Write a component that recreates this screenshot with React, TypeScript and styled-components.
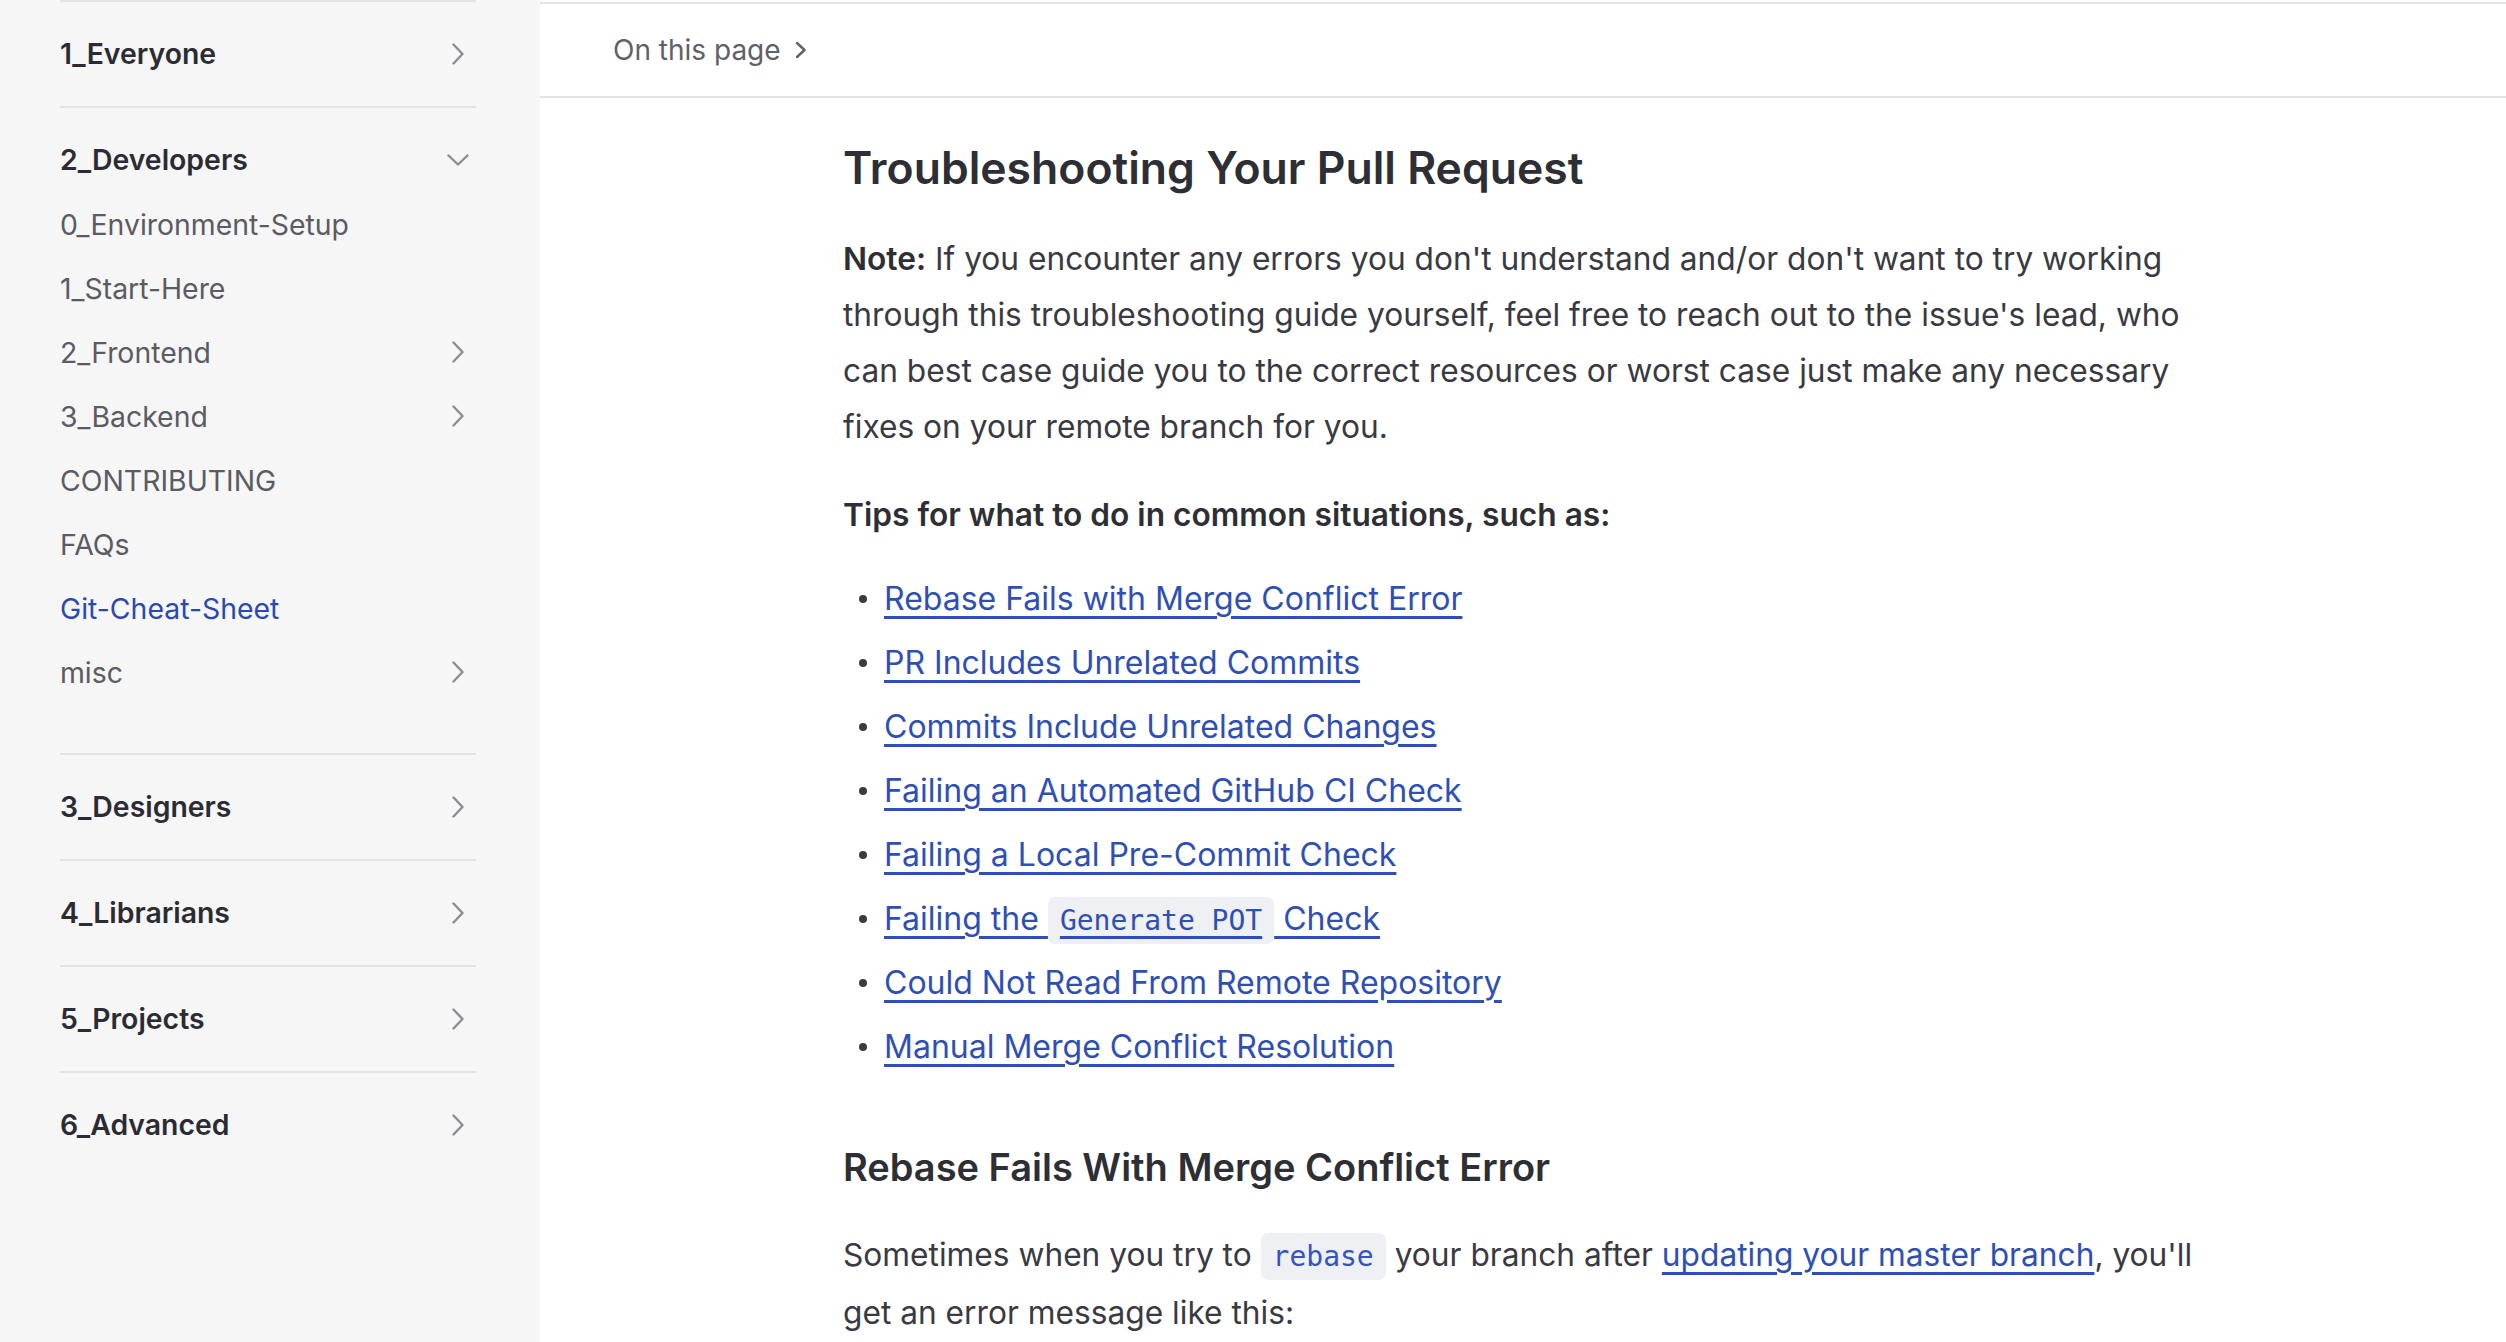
import React from "react";
import styled, { createGlobalStyle } from "styled-components";

const Global = createGlobalStyle`
  html, body { margin: 0; padding: 0; background: #ffffff; }
  body { font-family: Inter, "Noto Sans", sans-serif; -webkit-font-smoothing: antialiased; }
  * { box-sizing: border-box; }
`;

const Layout = styled.div`
  display: grid;
  grid-template-columns: 540px 1fr;
  height: 1342px;
  overflow: hidden;
`;

const Sidebar = styled.nav`
  background: #f6f6f6;
  padding: 0 64px 0 60px;
`;

const Group = styled.section`
  border-top: 2px solid #e3e3e3;
`;

const GroupHeader = styled.div<{ $open?: boolean }>`
  display: flex;
  align-items: center;
  justify-content: space-between;
  padding: ${(p) => (p.$open ? "32px 7px 12px 0" : "32px 7px 32px 0")};
  line-height: 40px;
  font-size: 28.4px;
  font-weight: 600;
  color: #2b2c33;
`;

const SubList = styled.div`
  padding-bottom: 49px;
`;

const SubItem = styled.a<{ $active?: boolean }>`
  display: flex;
  align-items: center;
  justify-content: space-between;
  height: 64px;
  padding-right: 7px;
  font-size: 28.4px;
  color: ${(p) => (p.$active ? "#2a48b0" : "#5a5b63")};
  text-decoration: none;
`;

const IconBox = styled.span`
  width: 22px;
  display: flex;
  justify-content: center;
  align-items: center;
  color: #8c8d94;
`;

const Chevron = ({ down }: { down?: boolean }) =>
  down ? (
    <svg width="22" height="12" viewBox="0 0 22 12" fill="none" stroke="currentColor" strokeWidth="2.4" strokeLinecap="round" strokeLinejoin="round">
      <polyline points="1.5,1.5 11,10.5 20.5,1.5" />
    </svg>
  ) : (
    <svg width="12" height="22" viewBox="0 0 12 22" fill="none" stroke="currentColor" strokeWidth="2.4" strokeLinecap="round" strokeLinejoin="round">
      <polyline points="1.5,1.5 10.5,11 1.5,20.5" />
    </svg>
  );

const Main = styled.main`
  display: flex;
  flex-direction: column;
  min-width: 0;
`;

const TopBar = styled.div`
  margin-top: 2px;
  height: 96px;
  border-top: 2px solid #e4e4e4;
  border-bottom: 2px solid #e4e4e4;
  display: flex;
  align-items: center;
  gap: 14px;
  padding-left: 73px;
  font-size: 28px;
  color: #5f6068;
`;

const TocChevron = styled.span`
  display: flex;
  color: #5f6068;
`;

const Content = styled.article`
  padding-left: 303px;
  width: 1683px;
  color: #393a42;
  font-size: 32px;
  line-height: 56px;
`;

const H1 = styled.h1`
  margin: 35px 0 0;
  font-size: 44.5px;
  font-weight: 600;
  line-height: 70px;
  color: #2e2f35;
`;

const H2 = styled.h2`
  margin: 60px 0 0;
  font-size: 38px;
  font-weight: 600;
  line-height: 56px;
  color: #2e2f35;
`;

const P = styled.p<{ $gap: number; $bold?: boolean; $lh?: number }>`
  margin: ${(p) => p.$gap}px 0 0;
  font-size: 31.7px;
  font-weight: ${(p) => (p.$bold ? 600 : 400)};
  line-height: ${(p) => p.$lh ?? 56}px;
  color: ${(p) => (p.$bold ? "#2e2f35" : "inherit")};
`;

const Strong = styled.strong`
  font-weight: 600;
  color: #2e2f35;
`;

const List = styled.ul`
  margin: 24px 0 0;
  padding: 0 0 0 16px;
  list-style: none;
`;

const Item = styled.li`
  display: flex;
  align-items: center;
  gap: 17px;
  height: 64px;
`;

const Bullet = styled.span`
  width: 8px;
  height: 8px;
  border-radius: 50%;
  background: #393a42;
  flex: none;
`;

const Link = styled.a`
  color: #2f4fb5;
  text-decoration: underline;
  text-decoration-thickness: 3px;
  text-underline-offset: 6px;
`;

const Code = styled.code<{ $accent?: boolean }>`
  font-family: "DejaVu Sans Mono", "Liberation Mono", monospace;
  font-size: 28px;
  line-height: 1;
  background: #eef0f3;
  border-radius: 7px;
  padding: 7px 12px;
  color: ${(p) => (p.$accent ? "#3554c0" : "inherit")};
`;

const developers: { label: string; chevron?: boolean; active?: boolean }[] = [
  { label: "0_Environment-Setup" },
  { label: "1_Start-Here" },
  { label: "2_Frontend", chevron: true },
  { label: "3_Backend", chevron: true },
  { label: "CONTRIBUTING" },
  { label: "FAQs" },
  { label: "Git-Cheat-Sheet", active: true },
  { label: "misc", chevron: true },
];

const collapsed = ["3_Designers", "4_Librarians", "5_Projects", "6_Advanced"];

const tips: React.ReactNode[] = [
  "Rebase Fails with Merge Conflict Error",
  "PR Includes Unrelated Commits",
  "Commits Include Unrelated Changes",
  "Failing an Automated GitHub CI Check",
  "Failing a Local Pre-Commit Check",
  <>
    Failing the <Code>Generate POT</Code> Check
  </>,
  "Could Not Read From Remote Repository",
  "Manual Merge Conflict Resolution",
];

export default function App() {
  return (
    <>
      <Global />
      <Layout>
        <Sidebar>
          <Group>
            <GroupHeader>
              1_Everyone
              <IconBox>
                <Chevron />
              </IconBox>
            </GroupHeader>
          </Group>
          <Group>
            <GroupHeader $open>
              2_Developers
              <IconBox>
                <Chevron down />
              </IconBox>
            </GroupHeader>
            <SubList>
              {developers.map((d) => (
                <SubItem key={d.label} $active={d.active}>
                  {d.label}
                  {d.chevron && (
                    <IconBox>
                      <Chevron />
                    </IconBox>
                  )}
                </SubItem>
              ))}
            </SubList>
          </Group>
          {collapsed.map((c) => (
            <Group key={c}>
              <GroupHeader>
                {c}
                <IconBox>
                  <Chevron />
                </IconBox>
              </GroupHeader>
            </Group>
          ))}
        </Sidebar>
        <Main>
          <TopBar>
            On this page
            <TocChevron>
              <svg width="12" height="18" viewBox="0 0 12 18" fill="none" stroke="currentColor" strokeWidth="2.4" strokeLinecap="round" strokeLinejoin="round">
                <polyline points="2,2 9.5,9 2,16" />
              </svg>
            </TocChevron>
          </TopBar>
          <Content>
            <H1>Troubleshooting Your Pull Request</H1>
            <P $gap={28}>
              <Strong>Note:</Strong> If you encounter any errors you don't understand and/or don't want to try working
              through this troubleshooting guide yourself, feel free to reach out to the issue's lead, who can best
              case guide you to the correct resources or worst case just make any necessary fixes on your remote
              branch for you.
            </P>
            <P $gap={32} $bold>
              Tips for what to do in common situations, such as:
            </P>
            <List>
              {tips.map((t, i) => (
                <Item key={i}>
                  <Bullet />
                  <Link href="#">{t}</Link>
                </Item>
              ))}
            </List>
            <H2>Rebase Fails With Merge Conflict Error</H2>
            <P $gap={31} $lh={57.5}>
              Sometimes when you try to <Code $accent>rebase</Code> your branch after{" "}
              <Link href="#">updating your master branch</Link>, you'll get an error message like this:
            </P>
          </Content>
        </Main>
      </Layout>
    </>
  );
}
